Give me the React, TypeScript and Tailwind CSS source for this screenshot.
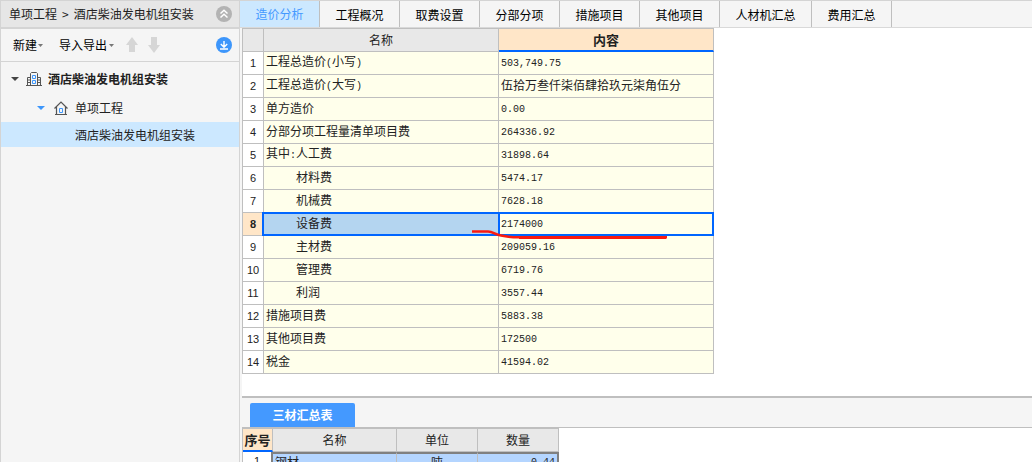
import React from "react";

const tabs = ["造价分析", "工程概况", "取费设置", "分部分项", "措施项目", "其他项目", "人材机汇总", "费用汇总"];

type Row = { name: string; value: string; indent?: boolean };

const rows: Row[] = [
  { name: "工程总造价(小写)", value: "503,749.75" },
  { name: "工程总造价(大写)", value: "伍拾万叁仟柒佰肆拾玖元柒角伍分" },
  { name: "单方造价", value: "0.00" },
  { name: "分部分项工程量清单项目费", value: "264336.92" },
  { name: "其中:人工费", value: "31898.64" },
  { name: "材料费", value: "5474.17", indent: true },
  { name: "机械费", value: "7628.18", indent: true },
  { name: "设备费", value: "2174000", indent: true },
  { name: "主材费", value: "209059.16", indent: true },
  { name: "管理费", value: "6719.76", indent: true },
  { name: "利润", value: "3557.44", indent: true },
  { name: "措施项目费", value: "5883.38" },
  { name: "其他项目费", value: "172500" },
  { name: "税金", value: "41594.02" },
];

const SELECTED = 7;

/* Sets ASCII characters half as wide as the Chinese ones around them. */
function GridText({ text }: { text: string }) {
  return (
    <>
      {text.split(/([\x21-\x7e]+)/).map((part, i) =>
        i % 2 ? (
          <span key={i} className="font-[Liberation_Mono,monospace] text-[10px]">
            {part}
          </span>
        ) : (
          part
        ),
      )}
    </>
  );
}

function Caret({ className }: { className: string }) {
  return (
    <svg className={className} viewBox="0 0 8 4" width="8" height="4" fill="currentColor" aria-hidden="true">
      <path d="M0 0h8L4 4z" />
    </svg>
  );
}

function SmallCaret() {
  return (
    <svg viewBox="0 0 5 3" width="5" height="3" fill="#777" aria-hidden="true">
      <path d="M0 0h5L2.500 3z" />
    </svg>
  );
}

function Arrow({ down }: { down?: boolean }) {
  return (
    <svg viewBox="0 0 12 16" width="12" height="16" fill="#d6d6d6" aria-hidden="true">
      <path d={down ? "M3 0h6v8h3l-6 8-6-8h3z" : "M6 0l6 8H9v7H3V8H0z"} />
    </svg>
  );
}

function Sidebar() {
  return (
    <aside className="flex w-60 shrink-0 flex-col border-x border-[#d4d4d4] bg-[#f5f5f5]">
      <div className="flex h-7 items-center justify-between border-b-2 border-[#d4d4d4] bg-[#e6e6e6] pr-[7px] pl-2">
        <div className="flex items-center gap-[5px]">
          <span>单项工程</span>
          <span>&gt;</span>
          <span>酒店柴油发电机组安装</span>
        </div>
        <button aria-label="折叠">
          <svg viewBox="0 0 16 16" width="16" height="16" fill="none" aria-hidden="true">
            <circle cx="8" cy="8" r="8" fill="#b3b3b3" />
            <path d="M4.500 7.500L8 4.200l3.500 3.300M4.500 11.500L8 8.200l3.500 3.300" stroke="#fff" strokeWidth="1.500" />
          </svg>
        </button>
      </div>
      <div className="flex h-[33px] items-center border-b border-[#d4d4d4] pr-[7px] pl-3 text-black">
        <button className="flex items-center gap-px">
          新建
          <SmallCaret />
        </button>
        <button className="ml-4 flex items-center gap-0.5">
          导入导出
          <SmallCaret />
        </button>
        <button className="ml-3" aria-label="上移">
          <Arrow />
        </button>
        <button className="ml-2.5" aria-label="下移">
          <Arrow down />
        </button>
        <button className="ml-auto" aria-label="下载">
          <svg viewBox="0 0 16 16" width="16" height="16" fill="none" aria-hidden="true">
            <circle cx="8" cy="8" r="8" fill="#3d96fb" />
            <path d="M8 4v6M4.800 7L8 10.200 11.200 7M4 12h8" stroke="#fff" strokeWidth="1.400" />
          </svg>
        </button>
      </div>
      <ul className="pt-px">
        <li className="flex h-[31px] items-center pl-2.5 font-bold">
          <Caret className="text-[#444]" />
          <svg className="mr-1.5 ml-[7px]" viewBox="0 0 16 16" width="16" height="16" fill="none" aria-hidden="true">
            <path
              d="M0 14.500h16M1.500 14.500v-8h3M4.500 14.500V2.500l1-1h5l1 1v12M11.500 6.500h3v8M1.500 9h3M1.500 11.500h3M11.500 9h3M11.500 11.500h3"
              stroke="#555"
            />
            <path d="M6.500 4.500h3v3h-3zM6.500 9.500h3v3h-3z" stroke="#3d96fb" />
          </svg>
          酒店柴油发电机组安装
        </li>
        <li className="flex h-7 items-center pl-9">
          <Caret className="text-[#3d96fb]" />
          <svg className="mr-[7px] ml-[9px]" viewBox="0 0 14 14" width="14" height="14" fill="none" aria-hidden="true">
            <path d="M.500 7.500L7 1l6.500 6.500M2.500 6v7.500M11.500 6v7.500M1 13.500h12" stroke="#555" strokeWidth="1.200" />
            <path d="M5.500 7.500h3v4h-3z" stroke="#3d96fb" />
          </svg>
          单项工程
        </li>
        <li className="flex h-[25px] items-center bg-[#cce8ff] pl-[74px]">酒店柴油发电机组安装</li>
      </ul>
    </aside>
  );
}

function CostTable() {
  return (
    <div className="relative w-[472px]">
      <table className="w-full table-fixed border-separate border-spacing-0 border-t border-l border-[#bfbfbf]">
        <colgroup>
          <col className="w-[21px]" />
          <col className="w-[235px]" />
          <col />
        </colgroup>
        <thead>
          <tr className="h-[23px] bg-[#e8e8e8]">
            <th className="border-r border-b border-[#bfbfbf] p-0" aria-label="行号" />
            <th className="border-r border-b border-[#bfbfbf] p-0 font-normal">名称</th>
            <th className="border-r border-b-2 border-r-[#bfbfbf] border-b-[#0066ff] bg-[#ffe6c8] p-0 text-[13px] font-bold">
              内容
            </th>
          </tr>
        </thead>
        <tbody>
          {rows.map((row, i) => {
            const selected = i === SELECTED;
            return (
              <tr key={row.name} className="h-[23px]">
                <th
                  className={
                    "border-r border-b border-[#bfbfbf] p-0 font-[Liberation_Sans,Noto_Sans_CJK_SC,sans-serif] text-[11px] " +
                    (selected ? "bg-[#ffe6c8] font-bold" : "bg-white font-normal")
                  }
                >
                  {i + 1}
                </th>
                <td
                  className={
                    "relative border-r border-b border-[#bfbfbf] pt-0 pr-0 pb-0.5 " +
                    (row.indent ? "pl-8 " : "pl-0.5 ") +
                    (selected ? "bg-[#b4d5f0]" : "bg-[#ffffeb]")
                  }
                >
                  <GridText text={row.name} />
                  {selected && <span className="absolute -inset-x-0.5 -inset-y-px z-10 border-2 border-[#0066ff]" />}
                </td>
                <td className="relative border-r border-b border-[#bfbfbf] bg-[#ffffeb] pt-0 pr-0 pb-0.5 pl-0.5">
                  <GridText text={row.value} />
                  {selected && <span className="absolute -inset-px z-10 border-2 border-[#0066ff]" />}
                </td>
              </tr>
            );
          })}
        </tbody>
      </table>
      <svg
        className="absolute top-[201px] left-[230px] z-20"
        viewBox="0 0 196 12"
        width="196"
        height="12"
        fill="none"
        aria-hidden="true"
      >
        <path d="M0 2.500h16c5 0 7 3 13 4q8 1.800 18 1.800h148" stroke="#fa1a10" strokeWidth="2.500" />
        <path d="M47 8.500h147" stroke="#fa1a10" strokeWidth="3" />
      </svg>
    </div>
  );
}

function MaterialSummary() {
  return (
    <section className="h-[66px] shrink-0 overflow-hidden border-t-2 border-[#bfbfbf] bg-white">
      <div className="flex h-[30px] items-end border-b border-[#bfbfbf] bg-[#f5f5f5] pl-2">
        <button className="h-6 w-[105px] rounded-t-xs bg-[#4499ff] font-bold text-white">三材汇总表</button>
      </div>
      <table className="w-[317px] table-fixed border-separate border-spacing-0 border-t border-l border-[#bfbfbf]">
        <colgroup>
          <col className="w-[30px]" />
          <col className="w-[124px]" />
          <col className="w-[81px]" />
          <col />
        </colgroup>
        <thead>
          <tr className="h-[23px] bg-[#e8e8e8]">
            <th className="border-r border-b-2 border-r-[#bfbfbf] border-b-[#0066ff] bg-[#ffe6c8] p-0 text-[13px] font-bold">
              序号
            </th>
            <th className="border-r border-b border-[#bfbfbf] p-0 font-normal">名称</th>
            <th className="border-r border-b border-[#bfbfbf] p-0 font-normal">单位</th>
            <th className="border-r border-b border-[#bfbfbf] p-0 font-normal">数量</th>
          </tr>
        </thead>
        <tbody>
          <tr className="h-3.5 bg-[#b4d5ff] leading-3">
            <th className="border-r-2 border-[#808080] bg-white p-0 font-[Liberation_Sans,sans-serif] text-[11px] leading-3 font-normal">
              1
            </th>
            <td className="border-t-2 border-r border-t-[#808080] border-r-[#bfbfbf] py-0 pr-0 pl-0.5">钢材</td>
            <td className="border-t-2 border-r border-t-[#808080] border-r-[#bfbfbf] p-0 text-center">吨</td>
            <td className="border-t-2 border-r-2 border-[#808080] py-0 pr-0.5 pl-0 text-right">
              <GridText text="0.44" />
            </td>
          </tr>
        </tbody>
      </table>
    </section>
  );
}

export default function App() {
  return (
    <div className="flex h-screen overflow-hidden border-t border-[#d4d4d4] bg-[#f5f5f5] font-[Noto_Sans_CJK_SC,sans-serif] text-xs leading-4 text-[#222]">
      <Sidebar />
      <main className="flex min-w-0 flex-1 flex-col">
        <nav className="flex h-[27px] shrink-0 border-b border-[#d9d9d9]">
          {tabs.map((tab, i) => (
            <button
              key={tab}
              className={
                "border-r border-[#bfbfbf] " +
                (tab.length > 4 ? "w-[92px] " : "w-20 ") +
                (i === 0 ? "bg-[#cce8ff] text-[#4499ff]" : "pt-0.5 text-black")
              }
            >
              {tab}
            </button>
          ))}
        </nav>
        <div className="flex min-h-0 flex-1 flex-col pl-0.5">
          <div className="min-h-0 flex-1 overflow-hidden bg-white">
            <CostTable />
          </div>
          <MaterialSummary />
        </div>
      </main>
    </div>
  );
}
